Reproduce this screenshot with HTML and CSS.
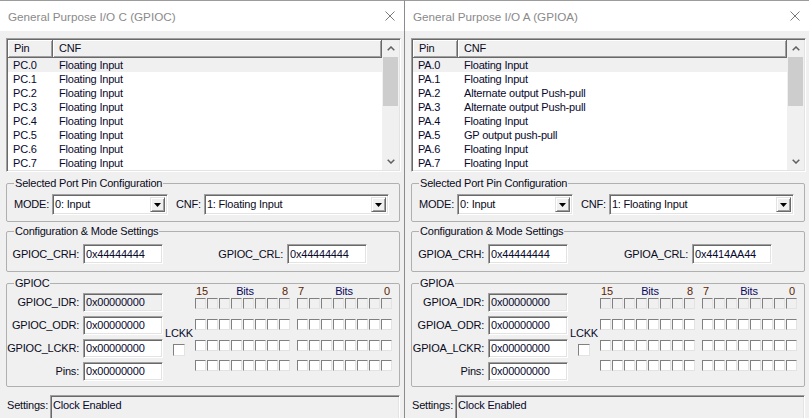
FILE: index.html
```html
<!DOCTYPE html>
<html>
<head>
<meta charset="utf-8">
<title>GPIO</title>
<link rel="stylesheet" href="styles.css">
</head>
<body>
<div class="desk">

<section class="win win-left">
  <header class="titlebar">
    <span class="title">General Purpose I/O C (GPIOC)</span>
    <svg class="close" width="10" height="10" viewBox="0 0 10 10"><path d="M0.5 0.5 L9.5 9.5 M9.5 0.5 L0.5 9.5" stroke="#7a7a7a" stroke-width="1" fill="none"/></svg>
  </header>
  <div class="list">
    <div class="lv">
      <div class="lv-head"><div class="hc hc-pin">Pin</div><div class="hc hc-cnf">CNF</div></div>
      <div class="row sel"><span class="c1">PC.0</span><span class="c2">Floating Input</span></div>
      <div class="row"><span class="c1">PC.1</span><span class="c2">Floating Input</span></div>
      <div class="row"><span class="c1">PC.2</span><span class="c2">Floating Input</span></div>
      <div class="row"><span class="c1">PC.3</span><span class="c2">Floating Input</span></div>
      <div class="row"><span class="c1">PC.4</span><span class="c2">Floating Input</span></div>
      <div class="row"><span class="c1">PC.5</span><span class="c2">Floating Input</span></div>
      <div class="row"><span class="c1">PC.6</span><span class="c2">Floating Input</span></div>
      <div class="row"><span class="c1">PC.7</span><span class="c2">Floating Input</span></div>
    </div>
    <div class="sb">
      <div class="sb-btn"><svg width="8" height="5" viewBox="0 0 8 5"><path d="M0.7 4.3 L4 1 L7.3 4.3" stroke="#606060" stroke-width="1.5" fill="none"/></svg></div>
      <div class="thumb"></div>
      <div class="track"></div>
      <div class="sb-btn"><svg width="8" height="5" viewBox="0 0 8 5"><path d="M0.7 0.7 L4 4 L7.3 0.7" stroke="#606060" stroke-width="1.5" fill="none"/></svg></div>
    </div>
  </div>

  <fieldset class="grp grp-mode">
    <legend>Selected Port Pin Configuration</legend>
    <div class="moderow">
      <span>MODE:</span>
      <div class="combo combo-mode"><span class="combo-txt">0: Input</span><span class="dd"><svg width="7" height="4" viewBox="0 0 7 4"><path d="M0 0 H7 L3.5 4 Z" fill="#000"/></svg></span></div>
      <span class="cnf-lbl">CNF:</span>
      <div class="combo combo-cnf"><span class="combo-txt">1: Floating Input</span><span class="dd"><svg width="7" height="4" viewBox="0 0 7 4"><path d="M0 0 H7 L3.5 4 Z" fill="#000"/></svg></span></div>
    </div>
  </fieldset>

  <fieldset class="grp grp-cfg">
    <legend>Configuration &amp; Mode Settings</legend>
    <div class="cfgrow">
      <span class="lbl">GPIOC_CRH:</span><div class="fld fld-tall">0x44444444</div>
      <span class="lbl lbl-wide">GPIOC_CRL:</span><div class="fld fld-tall">0x44444444</div>
    </div>
  </fieldset>

  <fieldset class="grp grp-port">
    <legend>GPIOC</legend>
    <div class="port">
      <div class="regs">
        <div class="reg"><span class="lbl">GPIOC_IDR:</span><div class="fld ro">0x00000000</div></div>
        <div class="reg"><span class="lbl">GPIOC_ODR:</span><div class="fld">0x00000000</div></div>
        <div class="reg"><span class="lbl">GPIOC_LCKR:</span><div class="fld">0x00000000</div></div>
        <div class="reg"><span class="lbl">Pins:</span><div class="fld">0x00000000</div></div>
      </div>
      <div class="lckk"><span class="lckk-lbl">LCKK</span><i class="chk"></i></div>
      <div class="bits">
        <div class="bithead">
          <div class="oct-h"><span class="num">15</span><span class="bl">Bits</span><span class="num">8</span></div>
          <div class="oct-h"><span class="num">7</span><span class="bl">Bits</span><span class="num">0</span></div>
        </div>
        <div class="bitrow ro">
          <div class="oct"><i></i><i></i><i></i><i></i><i></i><i></i><i></i><i></i></div>
          <div class="oct"><i></i><i></i><i></i><i></i><i></i><i></i><i></i><i></i></div>
        </div>
        <div class="bitrow">
          <div class="oct"><i></i><i></i><i></i><i></i><i></i><i></i><i></i><i></i></div>
          <div class="oct"><i></i><i></i><i></i><i></i><i></i><i></i><i></i><i></i></div>
        </div>
        <div class="bitrow">
          <div class="oct"><i></i><i></i><i></i><i></i><i></i><i></i><i></i><i></i></div>
          <div class="oct"><i></i><i></i><i></i><i></i><i></i><i></i><i></i><i></i></div>
        </div>
        <div class="bitrow">
          <div class="oct"><i></i><i></i><i></i><i></i><i></i><i></i><i></i><i></i></div>
          <div class="oct"><i></i><i></i><i></i><i></i><i></i><i></i><i></i><i></i></div>
        </div>
      </div>
    </div>
  </fieldset>

  <div class="status"><span class="status-lbl">Settings:</span><div class="status-fld">Clock Enabled</div></div>
</section>

<section class="win win-right">
  <header class="titlebar">
    <span class="title">General Purpose I/O A (GPIOA)</span>
    <svg class="close" width="10" height="10" viewBox="0 0 10 10"><path d="M0.5 0.5 L9.5 9.5 M9.5 0.5 L0.5 9.5" stroke="#7a7a7a" stroke-width="1" fill="none"/></svg>
  </header>
  <div class="list">
    <div class="lv">
      <div class="lv-head"><div class="hc hc-pin">Pin</div><div class="hc hc-cnf">CNF</div></div>
      <div class="row sel"><span class="c1">PA.0</span><span class="c2">Floating Input</span></div>
      <div class="row"><span class="c1">PA.1</span><span class="c2">Floating Input</span></div>
      <div class="row"><span class="c1">PA.2</span><span class="c2">Alternate output Push-pull</span></div>
      <div class="row"><span class="c1">PA.3</span><span class="c2">Alternate output Push-pull</span></div>
      <div class="row"><span class="c1">PA.4</span><span class="c2">Floating Input</span></div>
      <div class="row"><span class="c1">PA.5</span><span class="c2">GP output push-pull</span></div>
      <div class="row"><span class="c1">PA.6</span><span class="c2">Floating Input</span></div>
      <div class="row"><span class="c1">PA.7</span><span class="c2">Floating Input</span></div>
    </div>
    <div class="sb">
      <div class="sb-btn"><svg width="8" height="5" viewBox="0 0 8 5"><path d="M0.7 4.3 L4 1 L7.3 4.3" stroke="#606060" stroke-width="1.5" fill="none"/></svg></div>
      <div class="thumb"></div>
      <div class="track"></div>
      <div class="sb-btn"><svg width="8" height="5" viewBox="0 0 8 5"><path d="M0.7 0.7 L4 4 L7.3 0.7" stroke="#606060" stroke-width="1.5" fill="none"/></svg></div>
    </div>
  </div>

  <fieldset class="grp grp-mode">
    <legend>Selected Port Pin Configuration</legend>
    <div class="moderow">
      <span>MODE:</span>
      <div class="combo combo-mode"><span class="combo-txt">0: Input</span><span class="dd"><svg width="7" height="4" viewBox="0 0 7 4"><path d="M0 0 H7 L3.5 4 Z" fill="#000"/></svg></span></div>
      <span class="cnf-lbl">CNF:</span>
      <div class="combo combo-cnf"><span class="combo-txt">1: Floating Input</span><span class="dd"><svg width="7" height="4" viewBox="0 0 7 4"><path d="M0 0 H7 L3.5 4 Z" fill="#000"/></svg></span></div>
    </div>
  </fieldset>

  <fieldset class="grp grp-cfg">
    <legend>Configuration &amp; Mode Settings</legend>
    <div class="cfgrow">
      <span class="lbl">GPIOA_CRH:</span><div class="fld fld-tall">0x44444444</div>
      <span class="lbl lbl-wide">GPIOA_CRL:</span><div class="fld fld-tall">0x4414AA44</div>
    </div>
  </fieldset>

  <fieldset class="grp grp-port">
    <legend>GPIOA</legend>
    <div class="port">
      <div class="regs">
        <div class="reg"><span class="lbl">GPIOA_IDR:</span><div class="fld ro">0x00000000</div></div>
        <div class="reg"><span class="lbl">GPIOA_ODR:</span><div class="fld">0x00000000</div></div>
        <div class="reg"><span class="lbl">GPIOA_LCKR:</span><div class="fld">0x00000000</div></div>
        <div class="reg"><span class="lbl">Pins:</span><div class="fld">0x00000000</div></div>
      </div>
      <div class="lckk"><span class="lckk-lbl">LCKK</span><i class="chk"></i></div>
      <div class="bits">
        <div class="bithead">
          <div class="oct-h"><span class="num">15</span><span class="bl">Bits</span><span class="num">8</span></div>
          <div class="oct-h"><span class="num">7</span><span class="bl">Bits</span><span class="num">0</span></div>
        </div>
        <div class="bitrow ro">
          <div class="oct"><i></i><i></i><i></i><i></i><i></i><i></i><i></i><i></i></div>
          <div class="oct"><i></i><i></i><i></i><i></i><i></i><i></i><i></i><i></i></div>
        </div>
        <div class="bitrow">
          <div class="oct"><i></i><i></i><i></i><i></i><i></i><i></i><i></i><i></i></div>
          <div class="oct"><i></i><i></i><i></i><i></i><i></i><i></i><i></i><i></i></div>
        </div>
        <div class="bitrow">
          <div class="oct"><i></i><i></i><i></i><i></i><i></i><i></i><i></i><i></i></div>
          <div class="oct"><i></i><i></i><i></i><i></i><i></i><i></i><i></i><i></i></div>
        </div>
        <div class="bitrow">
          <div class="oct"><i></i><i></i><i></i><i></i><i></i><i></i><i></i><i></i></div>
          <div class="oct"><i></i><i></i><i></i><i></i><i></i><i></i><i></i><i></i></div>
        </div>
      </div>
    </div>
  </fieldset>

  <div class="status"><span class="status-lbl">Settings:</span><div class="status-fld">Clock Enabled</div></div>
</section>

</div>
</body>
</html>
```

FILE: styles.css
```css
* { box-sizing: border-box; margin: 0; padding: 0; }

html, body { width: 809px; height: 418px; overflow: hidden; }

body {
  background: #f0f0f0;
  font-family: "Liberation Sans", Arial, sans-serif;
  font-size: 11px;
  letter-spacing: -0.2px;
  line-height: 13px;
  color: #0a0a20;
}

.desk { display: flex; height: 418px; }

.win {
  flex: none;
  width: 404px;
  height: 418px;
  background: #f0f0f0;
  border-top: 1px solid #9c9c9c;
  display: flex;
  flex-direction: column;
  overflow: hidden;
}
.win-left { width: 405px; border-right: 1px solid #8c8c8c; }

/* title bar */
.titlebar {
  flex: none;
  height: 30px;
  background: #fff;
  display: flex;
  align-items: center;
  justify-content: space-between;
  padding: 0 9px 0 8px;
}
.title { font-size: 11.7px; letter-spacing: 0; line-height: 14px; color: #8a8a8a; padding-top: 1px; }
.close { display: block; margin-bottom: 1px; }

/* sunken look */
.list, .combo, .fld, .status-fld {
  border: 1px solid;
  border-color: #a0a0a0 #fff #fff #a0a0a0;
  box-shadow: inset 1px 1px 0 #696969, inset -1px -1px 0 #e3e3e3;
}

/* list view */
.list {
  flex: none;
  margin: 7px 0 0 6px;
  width: 395px;
  height: 134px;
  padding: 1px;
  background: #fff;
  display: flex;
}
.lv { flex: 1; min-width: 0; }
.lv-head { display: flex; height: 18px; }
.hc {
  background: #f0f0f0;
  border-right: 1px solid #696969;
  border-bottom: 1px solid #696969;
  box-shadow: inset 1px 1px 0 #fff, inset -1px -1px 0 #a0a0a0;
  padding-left: 6px;
  line-height: 17px;
}
.hc-pin { width: 45px; }
.hc-cnf { flex: 1; }
.row { display: flex; height: 14px; line-height: 14px; color: #08082c; }
.row.sel { background: #f0f0f0; }
.c1 { width: 45px; padding-left: 5px; }
.c2 { padding-left: 6px; }

.sb { width: 17px; display: flex; flex-direction: column; background: #f0f0f0; }
.sb-btn { height: 17px; display: flex; align-items: center; justify-content: center; }
.sb-btn svg { display: block; }
.thumb { height: 49px; margin: 0 1px; background: #cdcdcd; }
.track { flex: 1; }

/* group boxes */
.grp {
  flex: none;
  width: 394px;
  margin: 5px 0 0 6px;
  border: 1px solid #b0b0b0;
  border-radius: 2px;
  padding: 0;
  min-inline-size: 0;
}
.grp legend { margin-left: 7px; padding: 0 1px; line-height: 13px; }

.grp-mode { padding: 4px 0 6px 0; }
.moderow { display: flex; align-items: center; height: 21px; padding-left: 7px; }
.combo {
  height: 21px;
  background: #fff;
  padding: 2px;
  display: flex;
  align-items: center;
  margin-left: 3px;
}
.combo-mode { width: 116px; }
.combo-cnf { width: 185px; }
.combo-txt { flex: 1; }
.cnf-lbl { margin-left: 8px; }
.dd {
  width: 15px;
  height: 15px;
  background: #f0f0f0;
  border: 1px solid;
  border-color: #e3e3e3 #696969 #696969 #e3e3e3;
  box-shadow: inset 1px 1px 0 #fff, inset -1px -1px 0 #a0a0a0;
  display: flex;
  align-items: center;
  justify-content: center;
}
.dd svg { display: block; }

.grp-cfg { margin-top: 3px; padding: 6px 0 7px 0; }
.cfgrow { display: flex; align-items: center; height: 20px; }

.lbl { width: 76px; text-align: right; padding-right: 4px; white-space: nowrap; }
.lbl-wide { width: 124px; }
.fld {
  width: 80px;
  height: 19px;
  background: #fff;
  padding-left: 2px;
  line-height: 17px;
  color: #08082c;
}
.fld-tall { height: 20px; line-height: 18px; }
.fld.ro { background: #f0f0f0; }

.grp-port { padding: 3px 0 5px 0; }
.port { display: flex; height: 88px; }
.regs { display: flex; flex-direction: column; gap: 4px; }
.reg { display: flex; align-items: center; height: 19px; }

.lckk { width: 32px; display: flex; flex-direction: column; align-items: center; padding-top: 34px; }
.lckk-lbl { color: #08082c; }
.chk {
  display: block;
  width: 12px;
  height: 12px;
  margin-top: 4px;
  background: #fff;
  border: 1px solid;
  border-color: #808080 #e3e3e3 #e3e3e3 #808080;
}

.bits { display: flex; flex-direction: column; margin-top: -8px; }
.bithead { display: flex; gap: 6px; height: 14px; }
.oct-h { width: 96px; display: flex; justify-content: space-between; padding: 0 3px 0 1px; }
.num { color: #5a2400; }
.bl { color: #0a0a60; }
.bitrow { display: flex; gap: 6px; height: 22.7px; }
.oct { width: 96px; display: flex; gap: 1px; }
.oct i {
  display: block;
  width: 11px;
  height: 11px;
  background: #fff;
  border: 1px solid;
  border-color: #808080 #e3e3e3 #e3e3e3 #808080;
}
.bitrow.ro .oct i { background: #f0f0f0; }

/* status */
.status { flex: none; display: flex; margin-top: 8px; padding-left: 7px; }
.status-lbl { padding-top: 4px; }
.status-fld {
  margin-left: 2px;
  width: 350px;
  height: 26px;
  background: #f0f0f0;
  padding: 3px 0 0 2px;
  color: #08082c;
}
```
